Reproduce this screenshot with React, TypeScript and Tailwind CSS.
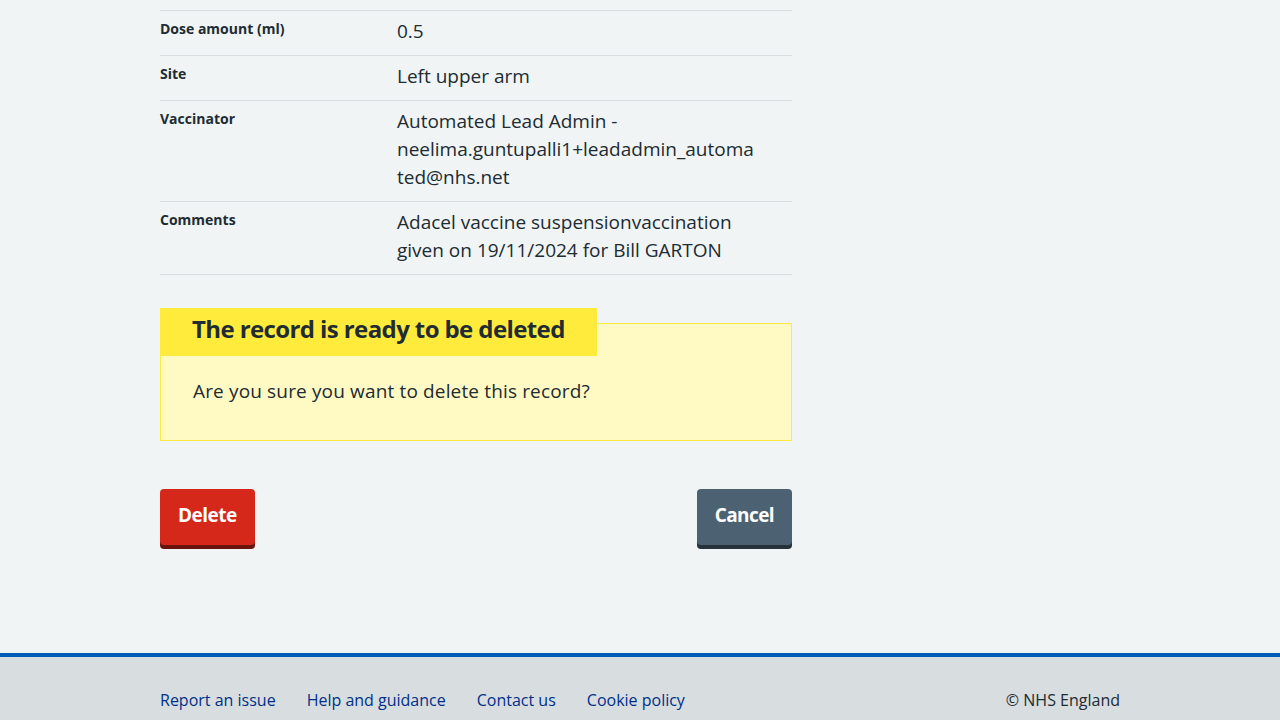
import React from 'react';

const rows: { label: string; value: string }[] = [
  { label: 'Dose amount (ml)', value: '0.5' },
  { label: 'Site', value: 'Left upper arm' },
  {
    label: 'Vaccinator',
    value: 'Automated Lead Admin - neelima.guntupalli1+leadadmin_automated@nhs.net',
  },
  {
    label: 'Comments',
    value: 'Adacel vaccine suspensionvaccination given on 19/11/2024 for Bill GARTON',
  },
];

const footerLinks = ['Report an issue', 'Help and guidance', 'Contact us', 'Cookie policy'];

const App: React.FC = () => {
  return (
    <div className="min-h-screen bg-[#f0f4f5] text-[#212b32] font-['Open_Sans',sans-serif] flex flex-col">
      {/* Main content */}
      <main className="w-[960px] mx-auto pt-[10px] pb-[108px]">
        <div className="w-[632px]">
          {/* Summary list */}
          <dl className="border-t border-[#d8dde0]">
            {rows.map((row) => (
              <div key={row.label} className="flex border-b border-[#d8dde0] py-[8px]">
                <dt className="w-[237px] shrink-0 text-[14px] leading-[20px] font-bold">
                  {row.label}
                </dt>
                <dd className="w-[362px] -mt-[2px] mb-[2px] text-[19px] leading-[28px] break-words">
                  {row.value}
                </dd>
              </div>
            ))}
          </dl>

          {/* Warning callout */}
          <div className="mt-[48px] border border-[#ffeb3b] bg-[#fff9c4] px-[32px] pb-[35px]">
            <h3 className="block w-fit -mt-[16px] -ml-[33px] bg-[#ffeb3b] px-[32px] pt-[5px] pb-[11px] text-[24px] leading-[32px] font-bold tracking-[-0.6px]">
              The record is ready to be deleted
            </h3>
            <p className="mt-[21px] text-[19px] leading-[28px] tracking-[0.15px]">
              Are you sure you want to delete this record?
            </p>
          </div>

          {/* Actions */}
          <div className="mt-[48px] flex justify-between">
            <button className="h-[56px] px-[18px] pb-[3px] rounded-[4px] bg-[#d5281b] text-white text-[19px] font-bold tracking-[-0.5px] shadow-[0_4px_0_#6b140e]">
              Delete
            </button>
            <button className="h-[56px] px-[18px] pb-[3px] rounded-[4px] bg-[#4c6272] text-white text-[19px] font-bold tracking-[-0.6px] shadow-[0_4px_0_#263139]">
              Cancel
            </button>
          </div>
        </div>
      </main>

      {/* Footer */}
      <footer className="flex-1 border-t-4 border-[#005eb8] bg-[#d8dde0]">
        <div className="w-[960px] mx-auto pt-[31px] pb-[32px] flex items-center justify-between text-[16px] leading-[24px]">
          <ul className="flex gap-[31px]">
            {footerLinks.map((link) => (
              <li key={link}>
                <a href="#" className="text-[#003087]">
                  {link}
                </a>
              </li>
            ))}
          </ul>
          <p className="text-[#212b32]">© NHS England</p>
        </div>
      </footer>
    </div>
  );
};

export default App;
